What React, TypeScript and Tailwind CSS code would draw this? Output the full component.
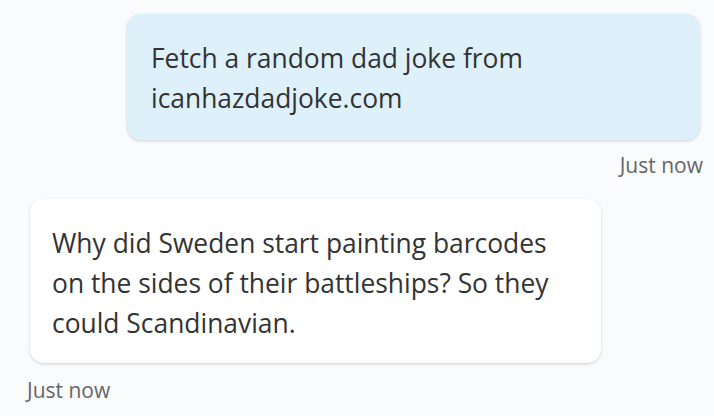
const messages = [
  {
    from: 'user',
    text: 'Fetch a random dad joke from icanhazdadjoke.com',
    time: 'Just now',
  },
  {
    from: 'bot',
    text: 'Why did Sweden start painting barcodes on the sides of their battleships? So they could Scandinavian.',
    time: 'Just now',
  },
];

export default function App() {
  return (
    <div
      className="w-[714px] h-[416px] overflow-hidden bg-[#fafbfd] text-[#333333]"
      style={{ fontFamily: '"Open Sans", "Noto Sans", sans-serif' }}
    >
      <div className="flex flex-col pt-[14px]">
        {messages.map((m, i) =>
          m.from === 'user' ? (
            <div key={i} className="flex flex-col items-end pr-[11px]">
              <div className="mr-[3px] w-[573px] rounded-[14px] bg-[#def1fa] pl-6 pr-6 pt-[24px] pb-[22px] text-[26.4px] leading-[40px] shadow-[0_1px_3px_rgba(0,0,0,0.18)]">
                {m.text}
              </div>
              <div className="mt-[13px] text-[21px] leading-6 text-[#666666]">{m.time}</div>
            </div>
          ) : (
            <div key={i} className="mt-[22px] flex flex-col items-start pl-[30px]">
              <div className="w-[571px] rounded-[14px] bg-white pl-[22px] pr-[22px] pt-[24px] pb-[20px] text-[26.4px] leading-[40px] shadow-[0_1px_3px_rgba(0,0,0,0.18)]">
                {m.text}
              </div>
              <div className="-ml-[3px] mt-[15px] text-[21px] leading-6 text-[#666666]">{m.time}</div>
            </div>
          ),
        )}
      </div>
    </div>
  );
}
